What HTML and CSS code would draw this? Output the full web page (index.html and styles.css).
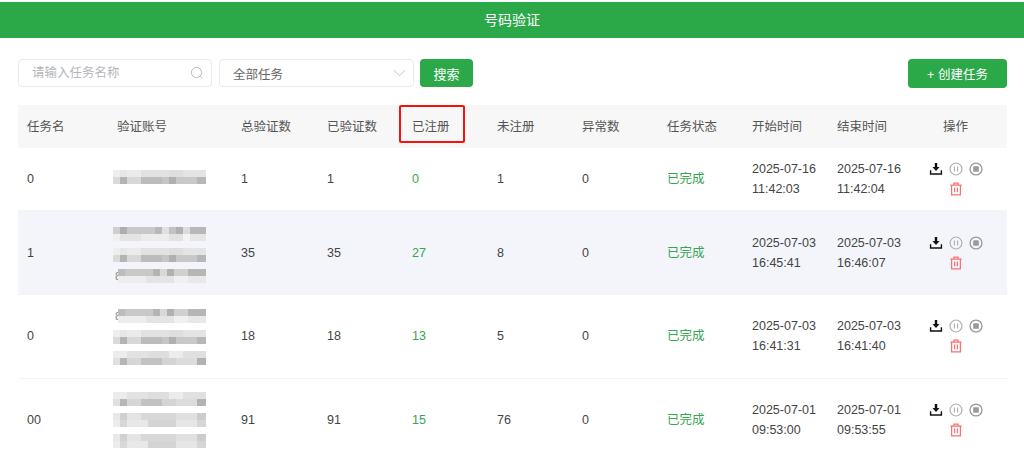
FILE: index.html
```html
<!DOCTYPE html>
<html lang="zh-CN">
<head>
    <meta charset="UTF-8">
    <meta name="viewport" content="width=device-width, initial-scale=1.0">
    <title>号码验证</title>
    <link rel="stylesheet" href="styles.css">
</head>
<body>
    <svg class="icon-defs" width="0" height="0">
        <symbol id="i-download" viewBox="0 0 16 16">
            <path d="M1 9.5V14.5H15V9.5H13.4V12.9H2.6V9.5Z" fill="currentColor"/>
            <path d="M6.6 1H9.4V5.6H12L8 10.4 4 5.6H6.6Z" fill="currentColor"/>
        </symbol>
        <symbol id="i-pause" viewBox="0 0 16 16">
            <circle cx="8" cy="8" r="6.8" fill="none" stroke="currentColor" stroke-width="1.3"/>
            <path d="M6.2 5.2V10.8M9.8 5.2V10.8" stroke="currentColor" stroke-width="1.3" fill="none"/>
        </symbol>
        <symbol id="i-stop" viewBox="0 0 16 16">
            <circle cx="8" cy="8" r="6.8" fill="none" stroke="currentColor" stroke-width="1.5"/>
            <rect x="4.8" y="4.8" width="6.4" height="6.4" rx="1" fill="currentColor"/>
        </symbol>
        <symbol id="i-trash" viewBox="0 0 16 16">
            <path d="M1.5 3.6H14.5M5.6 3.4V1.4H10.4V3.4M3 3.6V14.6H13V3.6M6.4 6.4V11.8M9.6 6.4V11.8" fill="none" stroke="currentColor" stroke-width="1.4"/>
        </symbol>
    </svg>

    <div class="page">
        <header class="title-bar">号码验证</header>

        <div class="toolbar">
            <div class="search-box">
                <input class="search-input" type="text" placeholder="请输入任务名称">
                <svg class="search-icon" viewBox="0 0 16 16" width="14" height="14">
                    <circle cx="7.4" cy="7.4" r="5.8" fill="none" stroke="currentColor" stroke-width="1.1"/>
                    <path d="M11.6 11.6L14 14" stroke="currentColor" stroke-width="1.1" fill="none"/>
                </svg>
            </div>
            <div class="select-box">
                <span>全部任务</span>
                <svg class="select-arrow" viewBox="0 0 14 8" width="13" height="8">
                    <path d="M1 1L7 7 13 1" fill="none" stroke="currentColor" stroke-width="1"/>
                </svg>
            </div>
            <button class="btn btn-search" type="button">搜索</button>
            <button class="btn btn-create" type="button">+ 创建任务</button>
        </div>

        <table class="task-table">
            <colgroup>
                <col class="col-name">
                <col class="col-account">
                <col class="col-num-first">
                <col class="col-num">
                <col class="col-num">
                <col class="col-num">
                <col class="col-num">
                <col class="col-num">
                <col class="col-num">
                <col class="col-num">
                <col class="col-actions">
            </colgroup>
            <thead>
                <tr>
                    <th>任务名</th>
                    <th>验证账号</th>
                    <th>总验证数</th>
                    <th>已验证数</th>
                    <th class="th-marked">已注册<span class="red-box"></span></th>
                    <th>未注册</th>
                    <th>异常数</th>
                    <th>任务状态</th>
                    <th>开始时间</th>
                    <th>结束时间</th>
                    <th class="th-actions">操作</th>
                </tr>
            </thead>
            <tbody>
                <tr class="row-low">
                    <td>0</td>
                    <td>
                        <div class="masks masks-up">
                            <span class="mask mask-a"></span>
                        </div>
                    </td>
                    <td>1</td>
                    <td>1</td>
                    <td class="green">0</td>
                    <td>1</td>
                    <td>0</td>
                    <td class="green">已完成</td>
                    <td>2025-07-16<br>11:42:03</td>
                    <td>2025-07-16<br>11:42:04</td>
                    <td>
                        <div class="actions">
                            <svg class="act act-download"><use href="#i-download"/></svg>
                            <svg class="act act-pause"><use href="#i-pause"/></svg>
                            <svg class="act act-stop"><use href="#i-stop"/></svg>
                            <svg class="act act-trash"><use href="#i-trash"/></svg>
                        </div>
                    </td>
                </tr>
                <tr class="row-alt row-low">
                    <td>1</td>
                    <td>
                        <div class="masks masks-down">
                            <span class="mask mask-b"></span>
                            <span class="mask mask-a"></span>
                            <div class="mask-row">
                                <span class="peek">8</span>
                                <span class="mask mask-e"></span>
                            </div>
                        </div>
                    </td>
                    <td>35</td>
                    <td>35</td>
                    <td class="green">27</td>
                    <td>8</td>
                    <td>0</td>
                    <td class="green">已完成</td>
                    <td>2025-07-03<br>16:45:41</td>
                    <td>2025-07-03<br>16:46:07</td>
                    <td>
                        <div class="actions">
                            <svg class="act act-download"><use href="#i-download"/></svg>
                            <svg class="act act-pause"><use href="#i-pause"/></svg>
                            <svg class="act act-stop"><use href="#i-stop"/></svg>
                            <svg class="act act-trash"><use href="#i-trash"/></svg>
                        </div>
                    </td>
                </tr>
                <tr>
                    <td>0</td>
                    <td>
                        <div class="masks">
                            <div class="mask-row">
                                <span class="peek">8</span>
                                <span class="mask mask-e"></span>
                            </div>
                            <span class="mask mask-a"></span>
                            <span class="mask mask-c"></span>
                        </div>
                    </td>
                    <td>18</td>
                    <td>18</td>
                    <td class="green">13</td>
                    <td>5</td>
                    <td>0</td>
                    <td class="green">已完成</td>
                    <td>2025-07-03<br>16:41:31</td>
                    <td>2025-07-03<br>16:41:40</td>
                    <td>
                        <div class="actions">
                            <svg class="act act-download"><use href="#i-download"/></svg>
                            <svg class="act act-pause"><use href="#i-pause"/></svg>
                            <svg class="act act-stop"><use href="#i-stop"/></svg>
                            <svg class="act act-trash"><use href="#i-trash"/></svg>
                        </div>
                    </td>
                </tr>
                <tr>
                    <td>00</td>
                    <td>
                        <div class="masks masks-high">
                            <span class="mask mask-c"></span>
                            <span class="mask mask-d"></span>
                            <span class="mask mask-d"></span>
                        </div>
                    </td>
                    <td>91</td>
                    <td>91</td>
                    <td class="green">15</td>
                    <td>76</td>
                    <td>0</td>
                    <td class="green">已完成</td>
                    <td>2025-07-01<br>09:53:00</td>
                    <td>2025-07-01<br>09:53:55</td>
                    <td>
                        <div class="actions">
                            <svg class="act act-download"><use href="#i-download"/></svg>
                            <svg class="act act-pause"><use href="#i-pause"/></svg>
                            <svg class="act act-stop"><use href="#i-stop"/></svg>
                            <svg class="act act-trash"><use href="#i-trash"/></svg>
                        </div>
                    </td>
                </tr>
            </tbody>
        </table>
    </div>
</body>
</html>
```

FILE: styles.css
```css
* {
    box-sizing: border-box;
}
html, body {
    margin: 0;
    height: 100%;
    overflow: hidden;
    background-color: white;
}
body {
    font-family: "Liberation Sans", "Noto Sans CJK SC", sans-serif;
    font-size: 12.5px;
    color: #444;
}
.icon-defs {
    position: absolute;
}
.page {
    padding-top: 2px;
}
.title-bar {
    height: 36px;
    line-height: 36px;
    text-align: center;
    font-size: 14px;
    color: white;
    background-color: #2ba848;
}
.toolbar {
    display: flex;
    align-items: center;
    gap: 6px;
    height: 30px;
    margin: 20px 17px 0 18px;
}
.search-box, .select-box {
    display: flex;
    align-items: center;
    height: 28px;
    border: 1px solid #e8eaef;
    border-radius: 4px;
    color: #666;
}
.search-box {
    width: 194px;
    padding: 0 7px 0 13px;
}
.search-input {
    flex: 1;
    min-width: 0;
    border: none;
    outline: none;
    padding: 0;
    font: inherit;
    color: #666;
}
.search-input::placeholder {
    color: #b4b6bb;
}
.search-icon {
    color: #b4b6bb;
}
.select-box {
    width: 195px;
    margin-left: 1px;
    padding: 0 7px 0 13px;
    justify-content: space-between;
}
.select-arrow {
    color: #c0c4cc;
}
.btn {
    border: none;
    border-radius: 4px;
    font: inherit;
    color: white;
    background-color: #2ba848;
    cursor: pointer;
}
.btn-search {
    width: 53px;
    height: 28px;
    font-size: 13px;
}
.btn-create {
    width: 99px;
    height: 29px;
    margin-left: auto;
}
.task-table {
    width: 989px;
    margin: 17px 0 0 18px;
    border-collapse: collapse;
    table-layout: fixed;
}
.col-name { width: 90px; }
.col-account { width: 124px; }
.col-num-first { width: 86px; }
.col-num { width: 85px; }
.col-actions { width: 94px; }
th {
    height: 43px;
    padding: 0 9px 2px;
    text-align: left;
    font-weight: normal;
    color: #555;
    background-color: #f7f7f7;
}
.th-marked {
    position: relative;
}
.red-box {
    position: absolute;
    left: -4px;
    top: 0;
    width: 66px;
    height: 38px;
    border: 2px solid #f5120e;
    border-radius: 2px;
}
.th-actions {
    text-align: center;
    padding: 0 9px 2px 0;
}
td {
    padding: 10px 9px 12px;
    line-height: 20px;
    border-bottom: 1px solid #f2f3f5;
    color: #444;
}
.row-low td {
    padding: 11px 9px;
}
.row-alt td {
    background-color: #f4f5fa;
}
.green {
    color: #35a552;
}

/* blurred account numbers */
.masks {
    display: flex;
    flex-direction: column;
    gap: 7px;
    padding: 4px 0 1px;
    margin-left: -4px;
}
.masks-up { padding: 0 0 5px; }
.masks-down { padding: 5px 0 0; }
.masks-high { padding: 3px 0 2px; }
.mask {
    display: block;
    width: 93px;
    height: 14px;
    background-repeat: no-repeat;
    background-size: 100% 7px;
    background-position: 0 0, 0 7px;
    filter: blur(0.7px);
}
.mask-row {
    display: flex;
    align-items: center;
    height: 14px;
}
.mask-row .mask {
    width: 88px;
}
.peek {
    width: 5px;
    font-size: 11px;
    line-height: 14px;
    color: #888;
    padding-left: 2px;
}
.mask-a {
    background-image:
        linear-gradient(90deg, #eee 0 7px, #e6e6e6 0 14px, #ebebeb 0 28px, #e2e2e2 0 56px, #dedede 0 70px, #e4e4e4 0 93px),
        linear-gradient(90deg, #dadada 0 7px, #b4b4b4 0 14px, #d8d8d8 0 28px, #bcbcbc 0 49px, #c6c6c6 0 56px, #b0b0b0 0 63px, #c8c8c8 0 84px, #b6b6b6 0 93px);
}
.mask-b {
    background-image:
        linear-gradient(90deg, #cfcfcf 0 7px, #aeaeae 0 14px, #c8c8c8 0 42px, #b8b8b8 0 49px, #e0e0e0 0 56px, #c2c2c2 0 63px, #b0b0b0 0 70px, #dcdcdc 0 77px, #b8b8b8 0 93px),
        linear-gradient(90deg, #f0f0f0 0 7px, #e4e4e4 0 28px, #ececec 0 56px, #e2e2e2 0 70px, #f4f4f4 0 77px, #e6e6e6 0 93px);
}
.mask-c {
    background-image:
        linear-gradient(90deg, #ececec 0 14px, #e2e2e2 0 35px, #dedede 0 56px, #ececec 0 70px, #e0e0e0 0 93px),
        linear-gradient(90deg, #e0e0e0 0 7px, #b6b6b6 0 14px, #d6d6d6 0 28px, #c2c2c2 0 49px, #d4d4d4 0 63px, #dcdcdc 0 84px, #b2b2b2 0 93px);
}
.mask-d {
    background-image:
        linear-gradient(90deg, #e8e8e8 0 7px, #d0d0d0 0 14px, #e4e4e4 0 28px, #d8d8d8 0 63px, #e0e0e0 0 84px, #cccccc 0 93px),
        linear-gradient(90deg, #ececec 0 7px, #d8d8d8 0 14px, #e8e8e8 0 35px, #d4d4d4 0 63px, #e6e6e6 0 84px, #d6d6d6 0 93px);
}
.mask-e {
    background-image:
        linear-gradient(90deg, #bcbcbc 0 7px, #c8c8c8 0 35px, #b4b4b4 0 42px, #d8d8d8 0 49px, #b0b0b0 0 56px, #d0d0d0 0 70px, #b6b6b6 0 88px),
        linear-gradient(90deg, #ededed 0 28px, #e4e4e4 0 56px, #f0f0f0 0 70px, #e8e8e8 0 88px);
}

.actions {
    display: flex;
    flex-wrap: wrap;
    justify-content: center;
    width: 60px;
    margin-left: 4px;
    row-gap: 6px;
}
.act {
    width: 14px;
    height: 14px;
    margin: 0 3px;
}
.act-download { color: #111; }
.act-pause { color: #b0b0b0; }
.act-stop { color: #9a9a9a; }
.act-trash { color: #fa7070; }
```
